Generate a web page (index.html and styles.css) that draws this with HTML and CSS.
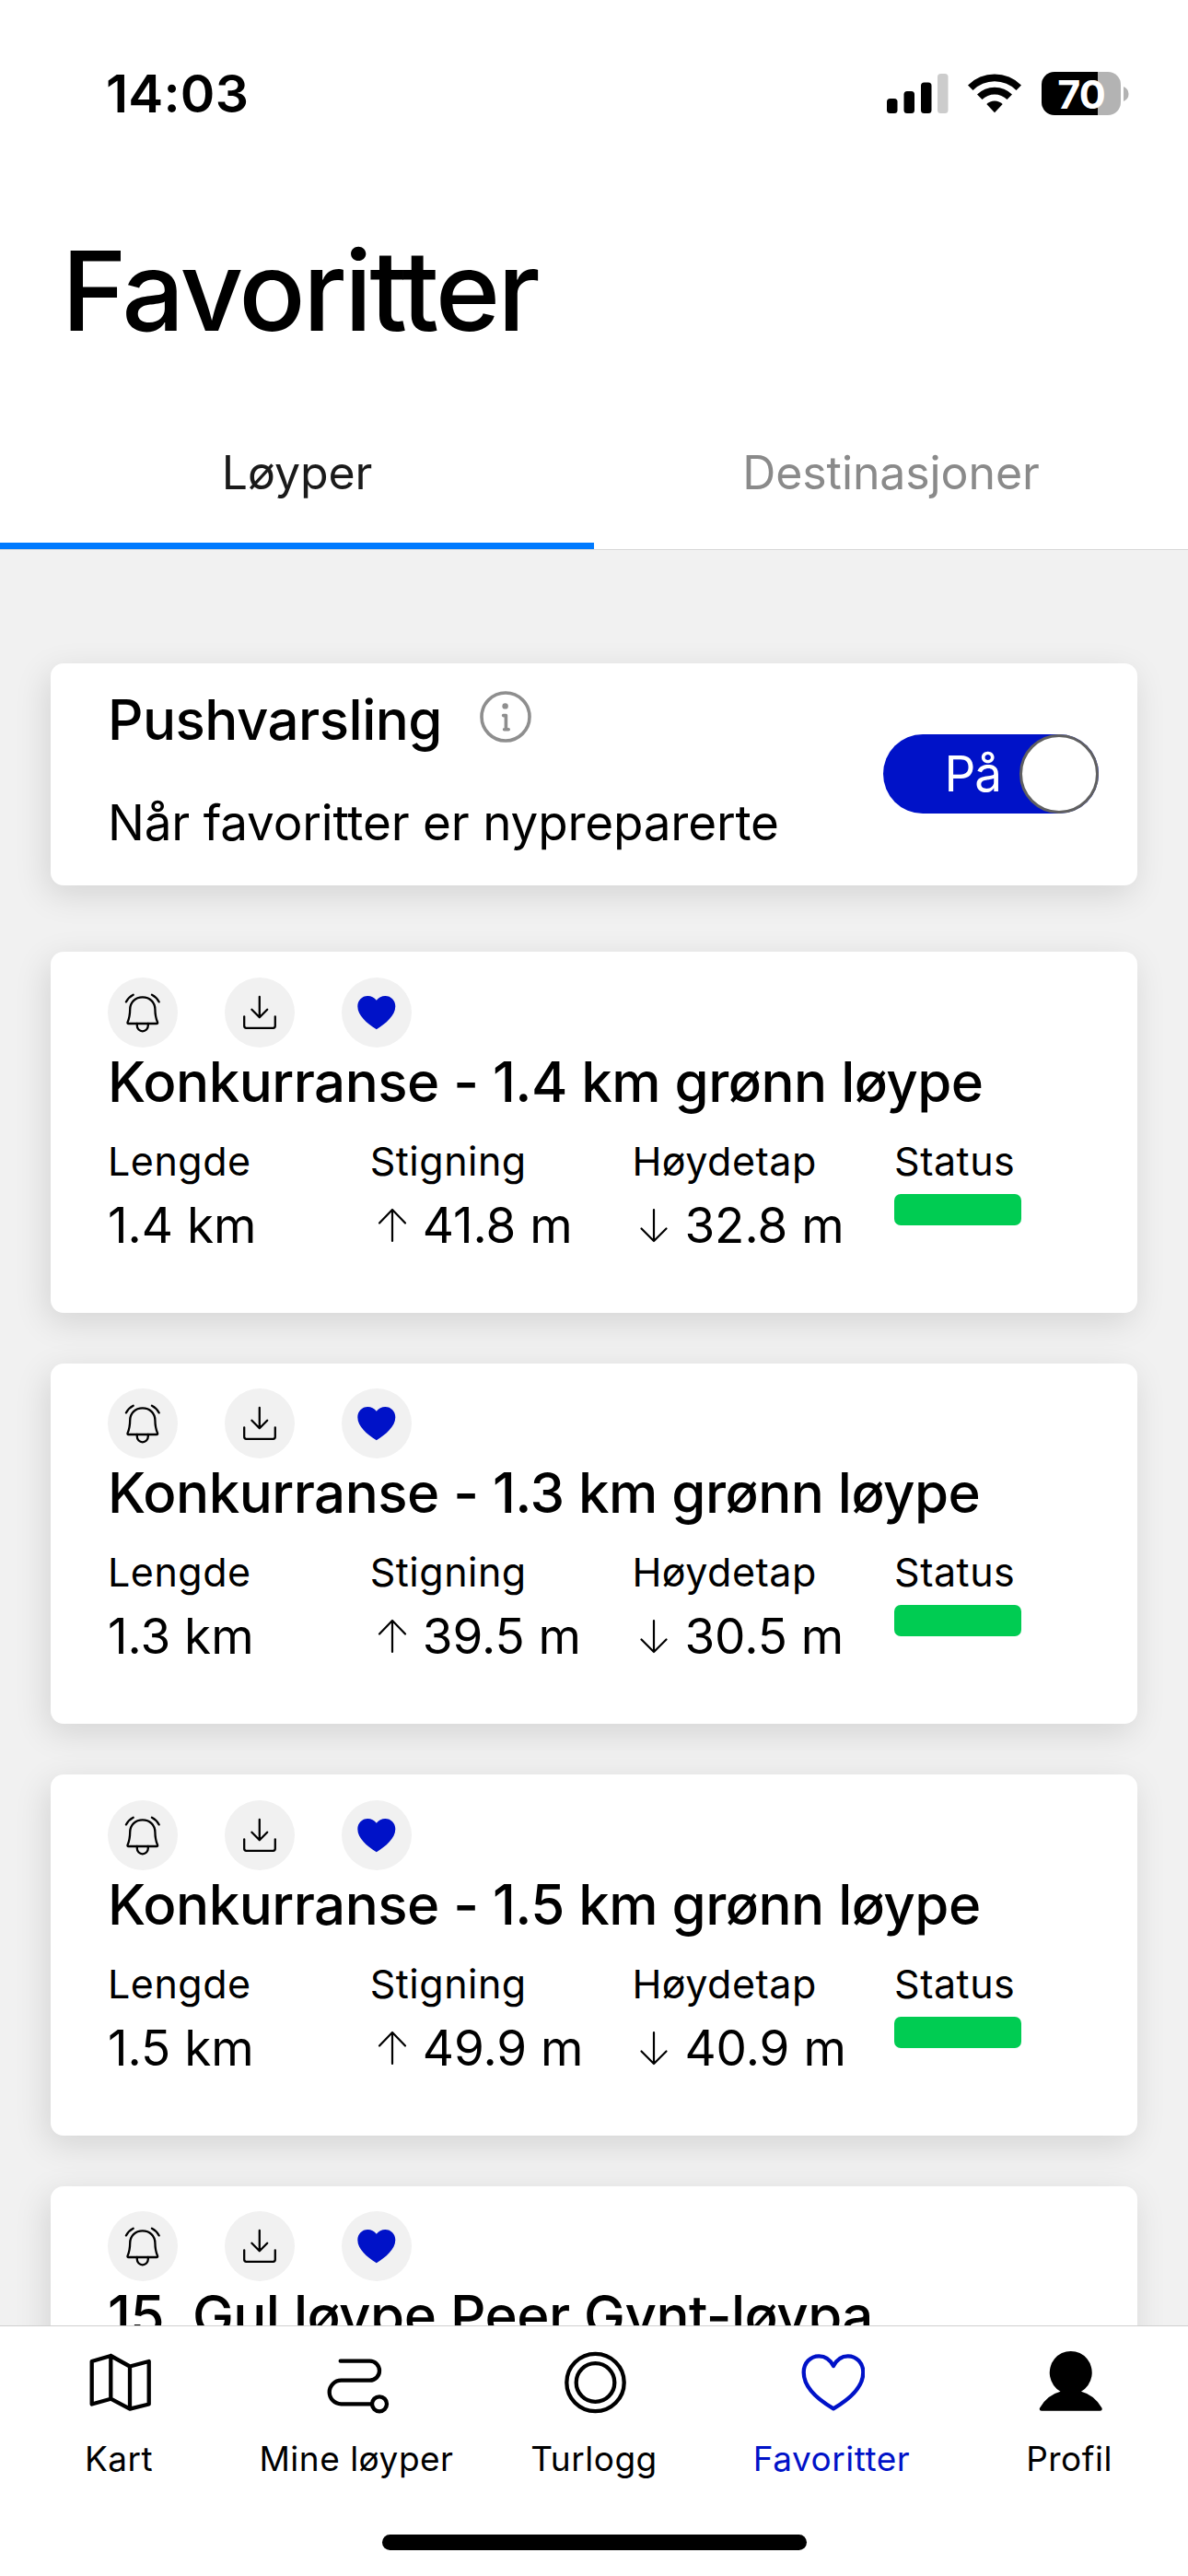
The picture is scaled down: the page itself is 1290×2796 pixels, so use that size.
FILE: index.html
```html
<!DOCTYPE html>
<html lang="no">
<head>
<meta charset="UTF-8">
<title>Favoritter</title>
<link rel="stylesheet" href="styles.css">
</head>
<body>

    <!-- Ikoner som brukes flere ganger -->
    <svg class="sprite" width="0" height="0">
        <symbol id="bell" viewBox="0 0 76 76">
            <g fill="none" stroke="#000" stroke-width="2.3" stroke-linecap="round" stroke-linejoin="round">
                <path d="M37.8 21.3C29.8 21.3 24.3 27 24.2 34.5C24.1 41 24 43 21.6 48.4Q21 50 22.6 50H53Q54.6 50 54 48.4C51.6 43 51.5 41 51.4 34.5C51.3 27 45.8 21.3 37.8 21.3Z"/>
                <path d="M31.8 50V52.3A6 6 0 0 0 43.8 52.3V50"/>
                <path d="M19.9 26.4Q22.5 21.3 27.7 18.7M55.7 26.4Q53.1 21.3 47.9 18.7"/>
            </g>
        </symbol>
        <symbol id="download" viewBox="0 0 76 76">
            <g fill="none" stroke="#000" stroke-width="2.3" stroke-linecap="round" stroke-linejoin="round">
                <path d="M37.8 21V43M29.4 34.8L37.8 43.2L46.2 34.8"/>
                <path d="M21.2 42.3V52.6Q21.2 54.8 23.4 54.8H52.6Q54.8 54.8 54.8 52.6V42.3"/>
            </g>
        </symbol>
        <symbol id="heart" viewBox="0 0 76 76">
            <path fill="#0012c8" d="M37.8 24.8C35.5 21.6 32 20 28.3 20C22 20 17.3 24.9 17.3 31.2C17.3 41 27.5 50 37.8 56.2C48.1 50 58.3 41 58.3 31.2C58.3 24.9 53.6 20 47.3 20C43.6 20 40.1 21.6 37.8 24.8Z"/>
        </symbol>
        <symbol id="up" viewBox="0 0 32 40">
            <path fill="none" stroke="#000" stroke-width="2.2" stroke-linecap="round" stroke-linejoin="round" d="M16 37V3M2 17.5L16 3L30 17.5"/>
        </symbol>
        <symbol id="down" viewBox="0 0 32 40">
            <path fill="none" stroke="#000" stroke-width="2.2" stroke-linecap="round" stroke-linejoin="round" d="M16 3V37M2.5 23.5L16 37L29.5 23.5"/>
        </symbol>
    </svg>

    <header class="header">
        <div class="status-bar">
            <span class="clock">14:03</span>
            <div class="status-icons">
                <svg class="signal" width="67" height="43" viewBox="0 0 67 43">
                    <rect x="0" y="27" width="11.5" height="16" rx="3.5"/>
                    <rect x="18.5" y="19" width="11.5" height="24" rx="3.5"/>
                    <rect x="37" y="9.5" width="11.5" height="33.5" rx="3.5"/>
                    <rect x="55" y="0" width="11.5" height="43" rx="3.5" fill="#ccc"/>
                </svg>
                <svg class="wifi" width="58" height="43" viewBox="0 0 58 43">
                    <path d="M0 12.5A41 41 0 0 1 58 12.5L52.5 18A33.3 33.3 0 0 0 5.5 18Z"/>
                    <path d="M10 22.5A27 27 0 0 1 48 22.5L42.5 28A19.2 19.2 0 0 0 15.5 28Z"/>
                    <path d="M20.3 33A12.4 12.4 0 0 1 37.7 33L29 42.3Z"/>
                </svg>
                <div class="battery"><span>70</span></div>
                <svg width="6" height="16" viewBox="0 0 6 16"><path fill="#b3b3b3" d="M0 0Q5.5 2.5 5.5 8T0 16Z"/></svg>
            </div>
        </div>
        <h1>Favoritter</h1>
        <div class="tabs">
            <div class="tab active">Løyper</div>
            <div class="tab">Destinasjoner</div>
        </div>
    </header>

    <main class="content">
        <div class="card push-card">
            <div class="push-text">
                <div class="push-title">
                    <h2>Pushvarsling</h2>
                    <svg width="56" height="56" viewBox="0 0 56 56">
                        <g fill="none" stroke="#8e8e8e" stroke-linecap="round" stroke-linejoin="round">
                            <circle cx="28" cy="28" r="26" stroke-width="3.6"/>
                            <path stroke-width="3.6" d="M25.6 26.6H28.4V41.5M26.6 41.8H31.2"/>
                        </g>
                        <circle cx="27.6" cy="16.4" r="3.2" fill="#8e8e8e"/>
                    </svg>
                </div>
                <p>Når favoritter er nypreparerte</p>
            </div>
            <div class="toggle"><span>På</span><div class="knob"></div></div>
        </div>

        <div class="card trail">
            <div class="actions">
                <svg><use href="#bell"/></svg>
                <svg><use href="#download"/></svg>
                <svg><use href="#heart"/></svg>
            </div>
            <h2>Konkurranse - 1.4 km grønn løype</h2>
            <div class="stats">
                <div class="stat"><label>Lengde</label><div class="value">1.4 km</div></div>
                <div class="stat"><label>Stigning</label><div class="value"><svg><use href="#up"/></svg>41.8 m</div></div>
                <div class="stat"><label>Høydetap</label><div class="value"><svg><use href="#down"/></svg>32.8 m</div></div>
                <div class="stat"><label>Status</label><div class="open"></div></div>
            </div>
        </div>

        <div class="card trail">
            <div class="actions">
                <svg><use href="#bell"/></svg>
                <svg><use href="#download"/></svg>
                <svg><use href="#heart"/></svg>
            </div>
            <h2>Konkurranse - 1.3 km grønn løype</h2>
            <div class="stats">
                <div class="stat"><label>Lengde</label><div class="value">1.3 km</div></div>
                <div class="stat"><label>Stigning</label><div class="value"><svg><use href="#up"/></svg>39.5 m</div></div>
                <div class="stat"><label>Høydetap</label><div class="value"><svg><use href="#down"/></svg>30.5 m</div></div>
                <div class="stat"><label>Status</label><div class="open"></div></div>
            </div>
        </div>

        <div class="card trail">
            <div class="actions">
                <svg><use href="#bell"/></svg>
                <svg><use href="#download"/></svg>
                <svg><use href="#heart"/></svg>
            </div>
            <h2>Konkurranse - 1.5 km grønn løype</h2>
            <div class="stats">
                <div class="stat"><label>Lengde</label><div class="value">1.5 km</div></div>
                <div class="stat"><label>Stigning</label><div class="value"><svg><use href="#up"/></svg>49.9 m</div></div>
                <div class="stat"><label>Høydetap</label><div class="value"><svg><use href="#down"/></svg>40.9 m</div></div>
                <div class="stat"><label>Status</label><div class="open"></div></div>
            </div>
        </div>

        <div class="card trail">
            <div class="actions">
                <svg><use href="#bell"/></svg>
                <svg><use href="#download"/></svg>
                <svg><use href="#heart"/></svg>
            </div>
            <h2>15. Gul løype Peer Gynt-løypa</h2>
        </div>
    </main>

    <footer class="footer">
        <nav class="nav">
            <div class="nav-item">
                <svg viewBox="0 0 72 72"><path d="M6.7 14L27.3 8L48 19.5L68.7 14V60.5L48 65.7L27.3 54.7L6.7 60.5ZM27.3 8V54.7M48 19.5V65.7"/></svg>
                <span>Kart</span>
            </div>
            <div class="nav-item">
                <svg viewBox="0 0 72 72"><path d="M18.7 13.7H50.5A10.5 10.5 0 0 1 50.5 34.7H19.5A12.8 12.8 0 0 0 19.5 60.3H53"/><circle cx="61" cy="60.3" r="8"/></svg>
                <span>Mine løyper</span>
            </div>
            <div class="nav-item">
                <svg viewBox="0 0 72 72"><circle cx="37.5" cy="37" r="31.2"/><circle cx="37.5" cy="37" r="20.8"/></svg>
                <span>Turlogg</span>
            </div>
            <div class="nav-item active">
                <svg viewBox="0 0 72 72"><path d="M38 19C34.5 12.2 28.8 8.3 22.3 8.3C13 8.3 5.7 15.8 5.7 26C5.7 42 22 56 38 65.3C54 56 70.3 42 70.3 26C70.3 15.8 63 8.3 53.7 8.3C47.2 8.3 41.5 12.2 38 19Z"/></svg>
                <span>Favoritter</span>
            </div>
            <div class="nav-item profile">
                <svg viewBox="0 0 72 72"><path d="M26.5 46.7A23 23.4 0 1 1 49 46.7Q63.5 50.5 71.4 64.5Q72.6 67.8 69.5 67.8H6Q2.9 67.8 4.1 64.5Q12 50.5 26.5 46.7Z"/></svg>
                <span>Profil</span>
            </div>
        </nav>
        <div class="home-indicator"></div>
    </footer>

</body>
</html>
```

FILE: styles.css
```css
* {
    box-sizing: border-box;
}
body {
    margin: 0;
    width: 1290px;
    height: 2796px;
    overflow: hidden;
    display: flex;
    flex-direction: column;
    font-family: Inter, "Liberation Sans", sans-serif;
    background-color: #f1f1f1;
    color: #000;
}
h1, h2, p {
    margin: 0;
}
.sprite {
    position: absolute;
}

/* Topp */
.header {
    height: 597px;
    flex: none;
    background-color: #fff;
    border-bottom: 1px solid #d8d8d8;
}
.status-bar {
    display: flex;
    justify-content: space-between;
    align-items: center;
    height: 203px;
    padding: 0 64px 0 115px;
}
.clock {
    font-size: 57px;
    font-weight: 600;
    letter-spacing: 0.2px;
}
.status-icons {
    display: flex;
    align-items: center;
}
.wifi {
    margin: 0 22px 0 21px;
}
.battery {
    width: 86px;
    height: 47px;
    margin-right: 3px;
    border-radius: 14px;
    background: linear-gradient(90deg, #000 61px, #b3b3b3 61px);
    color: #fff;
    font-size: 43px;
    font-weight: 700;
    line-height: 48px;
    letter-spacing: -1px;
    text-align: center;
}
h1 {
    margin-top: 40px;
    padding-left: 67px;
    font-size: 120px;
    font-weight: 500;
    line-height: 145px;
    letter-spacing: -2.9px;
}
.tabs {
    display: flex;
    margin-top: 42px;
}
.tab {
    flex: 1;
    height: 166px;
    line-height: 166px;
    text-align: center;
    font-size: 50px;
    letter-spacing: -0.1px;
    color: #8a8a8a;
}
.tab.active {
    color: #1a1a1a;
    box-shadow: inset 0 -7px #007aff;
}

/* Kort */
.content {
    flex: 1;
    min-height: 0;
    overflow: hidden;
    padding: 123px 55px 0;
}
.card {
    background-color: #fff;
    border-radius: 14px;
    box-shadow: -4px 10px 36px rgba(0, 0, 0, 0.12);
}
.card h2 {
    font-size: 60px;
    font-weight: 500;
    line-height: 75px;
    letter-spacing: -0.52px;
    white-space: nowrap;
}
.push-card {
    display: flex;
    justify-content: space-between;
    height: 241px;
    margin-bottom: 72px;
    padding: 0 42px 0 62px;
}
.push-title {
    display: flex;
    gap: 41px;
    margin-top: 24px;
}
.push-title svg {
    margin-top: 6px;
}
.push-text p {
    margin-top: 42px;
    font-size: 53px;
    line-height: 64px;
    letter-spacing: -0.2px;
}
.toggle {
    display: flex;
    justify-content: flex-end;
    align-items: center;
    width: 234px;
    height: 86px;
    margin-top: 77px;
    border-radius: 43px;
    background-color: #0012c8;
    color: #fff;
    font-size: 53px;
    letter-spacing: -1px;
}
.knob {
    width: 86px;
    height: 86px;
    margin-left: 20px;
    border: 3px solid #606060;
    border-radius: 50%;
    background-color: #fff;
}
.trail {
    height: 391.5px;
    margin-bottom: 55px;
    padding: 27.5px 0 0 62px;
}
.actions {
    display: flex;
    gap: 51px;
}
.actions svg {
    width: 76px;
    height: 76px;
    border-radius: 50%;
    background-color: #f1f1f1;
}
.stats {
    display: flex;
    margin-top: 22px;
}
.stat {
    flex: none;
    width: 284.7px;
}
.stat label {
    display: block;
    font-size: 43px;
    line-height: 52px;
    letter-spacing: 0.5px;
}
.value {
    display: flex;
    align-items: center;
    margin-top: 12px;
    font-size: 53px;
    line-height: 64px;
    white-space: pre;
}
.value svg {
    width: 32px;
    height: 40px;
    margin: 0 17px 0 8px;
}
.open {
    width: 138px;
    height: 34px;
    margin-top: 10px;
    border-radius: 7px;
    background-color: #00cc52;
}

/* Bunnmeny */
.footer {
    height: 272px;
    flex: none;
    background-color: #fff;
    border-top: 1px solid #cfcfcf;
}
.nav {
    display: flex;
    height: 226px;
    padding-top: 24px;
}
.nav-item {
    flex: 1;
    display: flex;
    flex-direction: column;
    align-items: center;
    font-size: 37px;
    line-height: 44px;
    letter-spacing: 0.5px;
}
.nav-item svg {
    width: 72px;
    height: 72px;
    margin-bottom: 26px;
    fill: none;
    stroke: #000;
    stroke-width: 4.3;
    stroke-linecap: round;
    stroke-linejoin: round;
}
.nav-item.active {
    color: #0012c8;
}
.nav-item.active svg {
    stroke: #0012c8;
}
.nav-item.profile svg {
    fill: #000;
    stroke: none;
}
.home-indicator {
    width: 461px;
    height: 17px;
    margin: 0 auto;
    border-radius: 9px;
    background-color: #000;
}
```
